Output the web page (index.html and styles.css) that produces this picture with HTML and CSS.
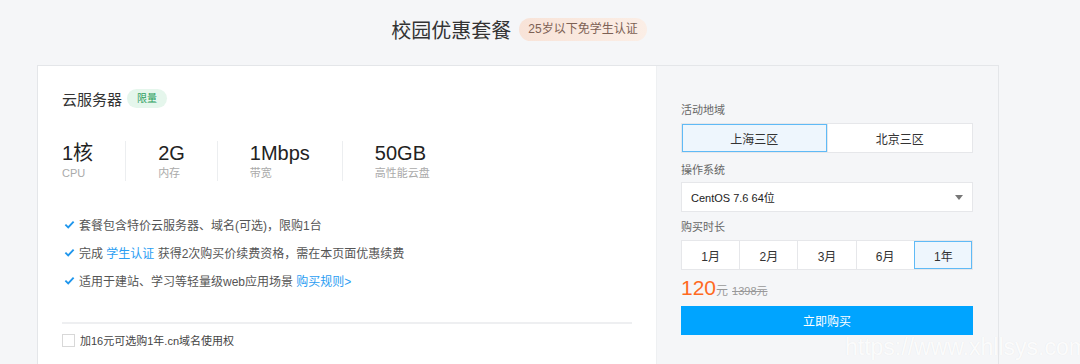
FILE: index.html
```html
<!DOCTYPE html>
<html lang="zh-CN">
<head>
    <meta charset="UTF-8">
    <meta name="viewport" content="width=device-width, initial-scale=1.0">
    <title>校园优惠套餐</title>
    <link rel="stylesheet" href="styles.css">
</head>
<body>
    <div class="page">
        <div class="header">
            <h1>校园优惠套餐</h1>
            <span class="header-badge">25岁以下免学生认证</span>
        </div>

        <div class="card">
            <div class="left-panel">
                <div class="product-title">
                    <span>云服务器</span>
                    <span class="tag">限量</span>
                </div>

                <div class="specs">
                    <div class="spec">
                        <div class="spec-value">1核</div>
                        <div class="spec-label">CPU</div>
                    </div>
                    <div class="spec">
                        <div class="spec-value">2G</div>
                        <div class="spec-label">内存</div>
                    </div>
                    <div class="spec">
                        <div class="spec-value">1Mbps</div>
                        <div class="spec-label">带宽</div>
                    </div>
                    <div class="spec">
                        <div class="spec-value">50GB</div>
                        <div class="spec-label">高性能云盘</div>
                    </div>
                </div>

                <ul class="features">
                    <li>
                        <svg class="check" viewBox="0 0 12 12"><path d="M1.5 6.2 L4.6 9.2 L10.5 2.8"/></svg>
                        套餐包含特价云服务器、域名(可选)，限购1台
                    </li>
                    <li>
                        <svg class="check" viewBox="0 0 12 12"><path d="M1.5 6.2 L4.6 9.2 L10.5 2.8"/></svg>
                        完成&nbsp;<a href="#">学生认证</a>&nbsp;获得2次购买价续费资格，需在本页面优惠续费
                    </li>
                    <li>
                        <svg class="check" viewBox="0 0 12 12"><path d="M1.5 6.2 L4.6 9.2 L10.5 2.8"/></svg>
                        适用于建站、学习等轻量级web应用场景&nbsp;<a href="#">购买规则&gt;</a>
                    </li>
                </ul>

                <div class="addon">
                    <span class="checkbox"></span>
                    <span>加16元可选购1年.cn域名使用权</span>
                </div>
            </div>

            <div class="right-panel">
                <div class="field-label">活动地域</div>
                <div class="options">
                    <div class="option active">上海三区</div>
                    <div class="option">北京三区</div>
                </div>

                <div class="field-label">操作系统</div>
                <div class="select">
                    <span>CentOS 7.6 64位</span>
                    <span class="caret"></span>
                </div>

                <div class="field-label">购买时长</div>
                <div class="options">
                    <div class="option">1月</div>
                    <div class="option">2月</div>
                    <div class="option">3月</div>
                    <div class="option">6月</div>
                    <div class="option active">1年</div>
                </div>

                <div class="price">
                    <span class="price-now">120</span><span class="price-unit">元</span>
                    <span class="price-old">1398元</span>
                </div>

                <button class="buy-btn">立即购买</button>
            </div>
        </div>
    </div>

    <div class="watermark">https://www.xhllsys.com</div>
</body>
</html>
```

FILE: styles.css
```css
body {
    font-family: "Liberation Sans", "Noto Sans CJK SC", sans-serif;
    margin: 0;
    padding: 0;
    background: #f5f6f8;
    color: #333;
    overflow: hidden;
}
.page {
    width: 962px;
    margin-left: 37px;
}
.header {
    display: flex;
    align-items: center;
    justify-content: center;
    gap: 8px;
    height: 58px;
    padding-left: 2px;
}
.header h1 {
    margin: 0;
    font-size: 20px;
    font-weight: normal;
    color: #333;
}
.header-badge {
    background: linear-gradient(90deg, #f8e3d8 0%, #fbeee6 100%);
    color: #7d6154;
    font-size: 12px;
    padding: 0 9px;
    height: 23px;
    line-height: 23px;
    border-radius: 12px;
}
.card {
    display: flex;
    margin-top: 7px;
    border: 1px solid #e4e6e9;
    height: 298px;
}
.left-panel {
    width: 570px;
    background: white;
    padding: 22px 24px 0 24px;
}
.product-title {
    display: flex;
    align-items: center;
    gap: 5px;
    font-size: 15px;
    color: #333;
}
.tag {
    background: #e5f6ec;
    color: #2a9d5c;
    font-size: 10px;
    height: 19px;
    line-height: 19px;
    padding: 0 10px;
    border-radius: 10px;
}
.specs {
    display: flex;
    margin-top: 32px;
}
.spec {
    padding: 0 32px;
    border-left: 1px solid #eceef0;
}
.spec:first-child {
    padding-left: 0;
    border-left: none;
}
.spec-value {
    font-size: 20px;
    line-height: 24px;
    color: #222;
}
.spec-label {
    font-size: 11px;
    line-height: 16px;
    color: #aaa;
}
.features {
    list-style: none;
    margin: 29px 0 0 0;
    padding: 0;
}
.features li {
    display: flex;
    align-items: center;
    height: 28px;
    font-size: 12px;
    color: #555;
    padding-left: 2px;
}
.features a {
    color: #2b9df2;
    text-decoration: none;
}
.check {
    width: 11px;
    height: 11px;
    margin-right: 4px;
    fill: none;
    stroke: #1f96ec;
    stroke-width: 2;
}
.addon {
    display: flex;
    align-items: center;
    gap: 3px;
    margin-top: 28px;
    border-top: 2px solid #eeeff1;
    padding-top: 8px;
    font-size: 11px;
    color: #444;
}
.checkbox {
    width: 11px;
    height: 11px;
    border: 1px solid #d8d8d8;
    background: white;
    margin-right: 2px;
}
.right-panel {
    flex: 1;
    background: #f5f6f8;
    border-left: 1px solid #eef0f2;
    padding: 36px 25px 0 24px;
}
.field-label {
    font-size: 11px;
    line-height: 16px;
    color: #666;
}
.options {
    display: flex;
    margin: 5px 0 9px 0;
    height: 30px;
    background: white;
    border: 1px solid #e6e7ea;
    box-sizing: border-box;
}
.option {
    flex: 1;
    display: flex;
    align-items: center;
    justify-content: center;
    font-size: 12px;
    color: #333;
    border-left: 1px solid #e6e7ea;
}
.option:first-child {
    border-left: none;
}
.option.active {
    background: #eef6fd;
    outline: 1px solid #5fbaf6;
    outline-offset: -1px;
}
.select {
    display: flex;
    align-items: center;
    justify-content: space-between;
    height: 30px;
    margin: 4px 0 7px 0;
    padding: 0 9px;
    background: white;
    border: 1px solid #e6e7ea;
    box-sizing: border-box;
    font-size: 11px;
    color: #222;
}
.caret {
    width: 0;
    height: 0;
    border-left: 4px solid transparent;
    border-right: 4px solid transparent;
    border-top: 5px solid #777;
}
.price {
    display: flex;
    align-items: baseline;
    margin-top: -3px;
    height: 24px;
}
.price-now {
    font-size: 21px;
    color: #ff6a1f;
}
.price-unit {
    font-size: 12px;
    color: #999;
    margin-right: 4px;
}
.price-old {
    font-size: 11px;
    color: #999;
    text-decoration: line-through;
}
.buy-btn {
    display: block;
    width: 100%;
    height: 29px;
    margin-top: 6px;
    border: none;
    background: #00a4ff;
    color: white;
    font-family: inherit;
    font-size: 12px;
    cursor: pointer;
}
.buy-btn:hover { background: #0095e8; }
.watermark {
    position: absolute;
    left: 845px;
    top: 333px;
    font-size: 23px;
    line-height: 28px;
    color: rgba(255,255,255,0.9);
    text-shadow: 0 0 1px rgba(0,0,0,0.08);
    pointer-events: none;
}
```
